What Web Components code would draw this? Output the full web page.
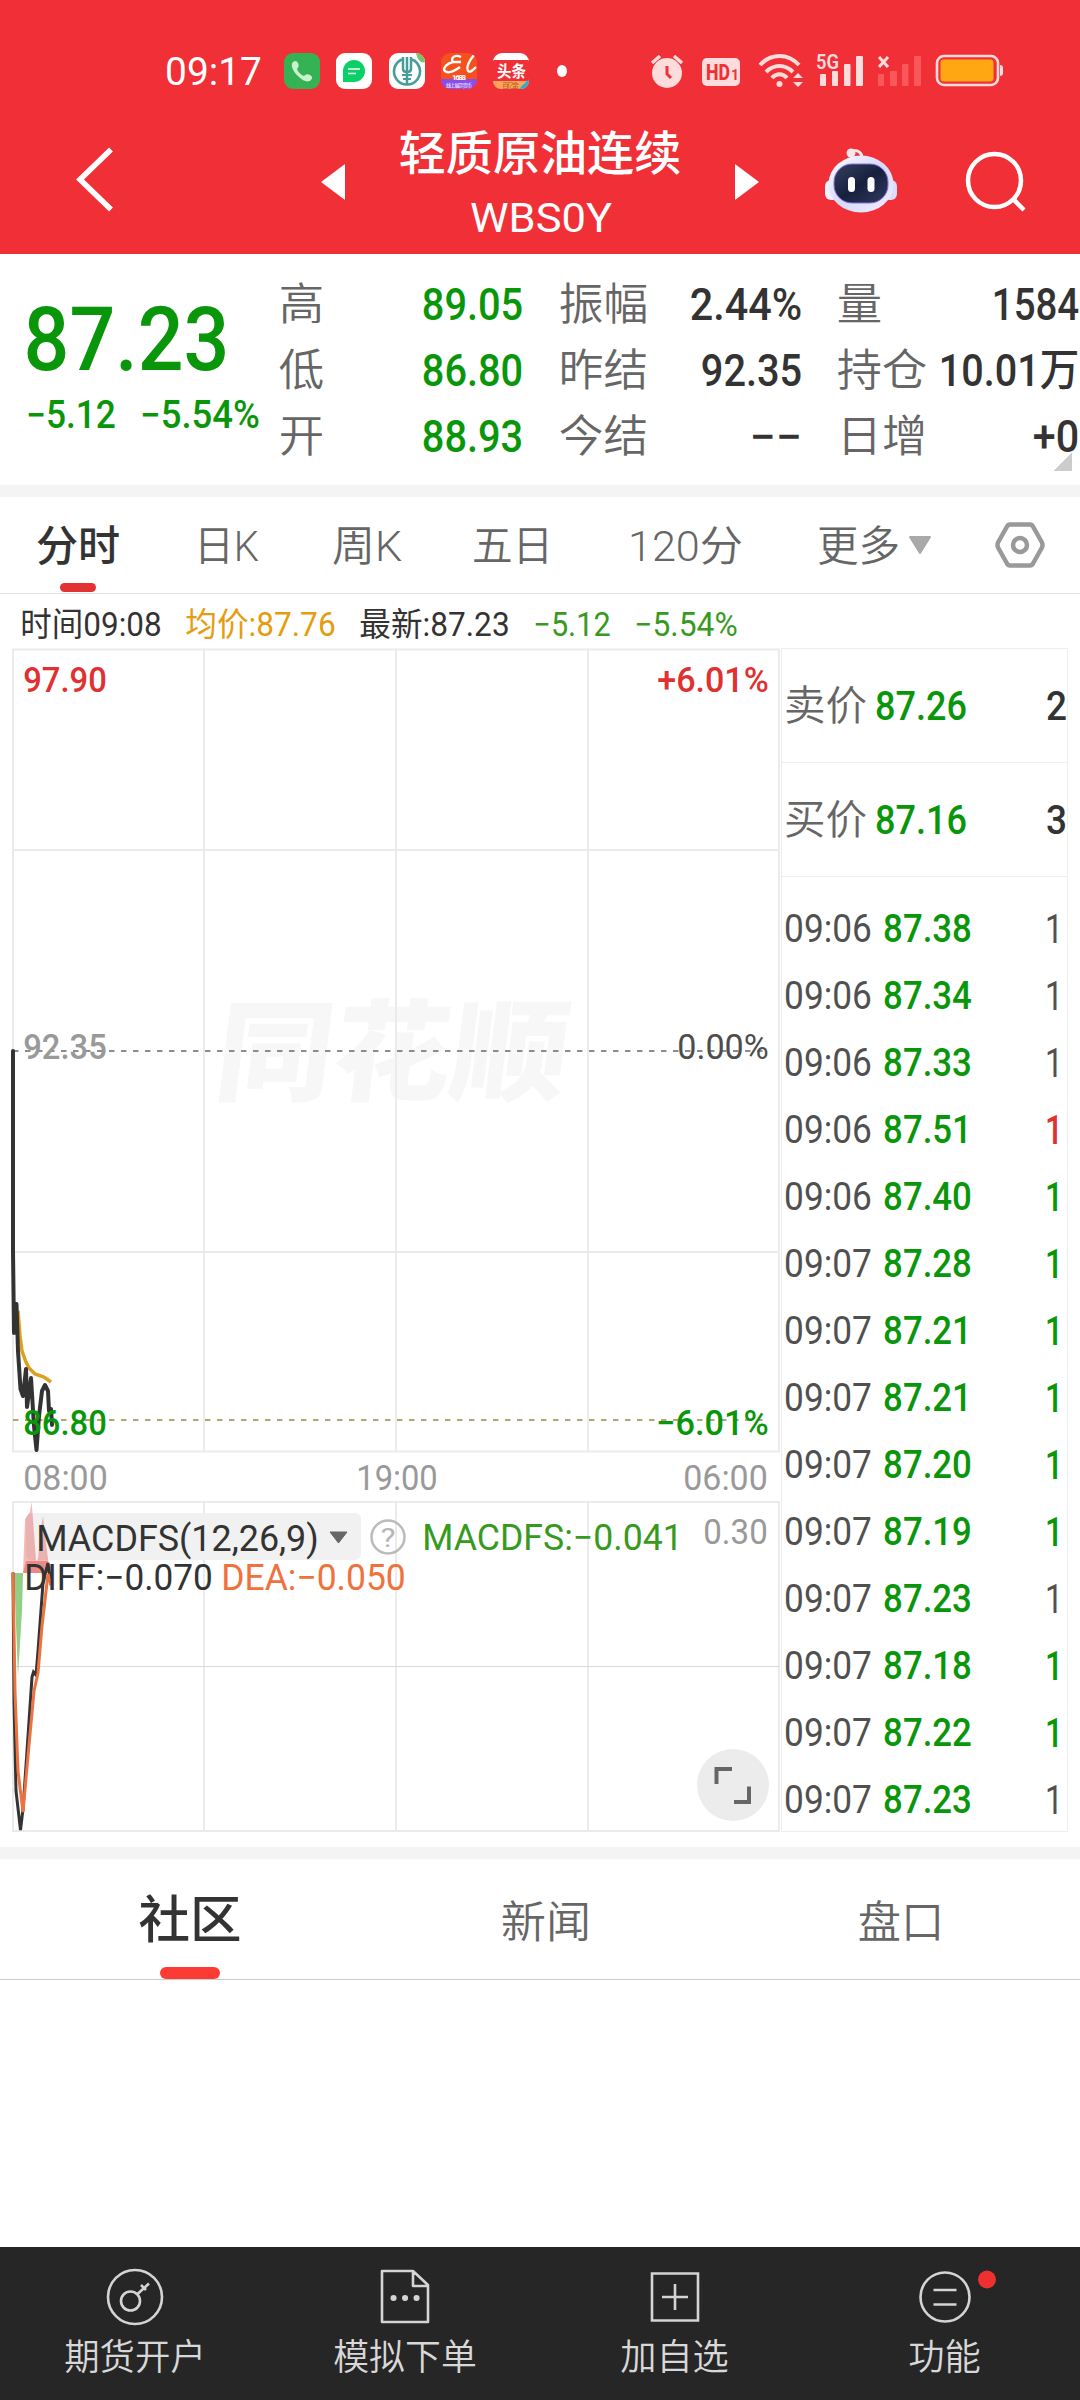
<!DOCTYPE html>
<html lang="zh-CN">
<head>
<meta charset="utf-8">
<title>轻质原油连续 WBS0Y</title>
<style>
  body { margin: 0; background: #fff; }
</style>
</head>
<body>
<quote-app></quote-app>
<script>
const FONT = 'Roboto, "Noto Sans CJK SC", sans-serif';
const GREEN = '#0a960a';
const RED = '#e0302f';

/**
 * <fit-text w size weight> — one line of text squeezed to a given ink width.
 * The box is as high as a capital letter, its bottom edge is the baseline.
 */
class FitText extends HTMLElement {
  connectedCallback() {
    const size = Number(this.getAttribute('size'));
    const w = Number(this.getAttribute('w'));
    const side = size * 0.05;
    const h = Math.round(size * 0.711);
    this.attachShadow({ mode: 'open' }).innerHTML = `
      <style>
        :host { display: block; flex: none; width: ${w}px; height: ${h}px; }
        svg { display: block; overflow: visible; }
        text { font-family: ${FONT}; fill: currentColor; white-space: pre; }
      </style>
      <svg width="${w}" height="${h}"><text x="${-side}" y="${h}" font-size="${size}"
        font-weight="${this.getAttribute('weight') || 400}" textLength="${w + side * 2}"
        lengthAdjust="spacingAndGlyphs"></text></svg>
    `;
    this.shadowRoot.querySelector('text').textContent = this.getAttribute('text');
  }
}
customElements.define('fit-text', FitText);

const t = (text, w, size, weight = 400, style = '') =>
  `<fit-text text="${text}" w="${w}" size="${size}" weight="${weight}" style="${style}"></fit-text>`;

// Elements below only differ in their markup.
function define(name, html) {
  customElements.define(name, class extends HTMLElement {
    constructor() {
      super();
      this.attachShadow({ mode: 'open' }).innerHTML = html;
    }
  });
}

define('status-bar', `
  <style>
    :host { display: flex; align-items: center; height: 50px; padding: 46px 75px 0 167px; color: #fff; }
    svg { display: block; flex: none; overflow: visible; }
    .apps { display: flex; gap: 16.3px; margin-left: 24px; }
    .dot { width: 12px; height: 12px; border-radius: 50%; background: #fff; margin-left: 27.5px; }
    .sys { display: flex; align-items: center; margin-left: 83.5px; }
    text { font-family: ${FONT}; }
  </style>
  ${t('09:17', 93, 38)}
  <div class="apps">
    <svg width="36" height="36" viewBox="0 0 36 36">
      <rect width="36" height="36" rx="9" fill="#35b254"/>
      <path d="M9 9c2-2 4-1 5 1s1 4-1 6c1 3 4 6 7 7 2-2 4-2 6-1s3 3 1 5c-3 3-8 1-12-3-6-5-9-12-6-15z" fill="#c9f3d0"/>
    </svg>
    <svg width="36" height="36" viewBox="0 0 36 36">
      <rect width="36" height="36" rx="9" fill="#fff"/>
      <path d="M7 29V18a11 11 0 1 1 11 11z" fill="#0bd068"/>
      <path d="M12 16h12M12 20.500h8" stroke="#fff" stroke-width="1.600"/>
    </svg>
    <svg width="36" height="36" viewBox="0 0 36 36">
      <rect width="36" height="36" rx="9" fill="#fff"/>
      <path d="M27 0a9 9 0 0 1 9 9c-4 2-8-3-9-9z" fill="#79c267"/>
      <g fill="none" stroke="#479d99">
        <path d="M13 6.500a13 13 0 1 0 10 0" stroke-width="2.600"/>
        <path d="M18 4v27M14 4v12q0 3 4 3t4-3V4" stroke-width="2.500"/>
        <path d="M13 22h10M14 26h8" stroke-width="2"/>
      </g>
    </svg>
    <svg width="36" height="36" viewBox="0 0 36 36">
      <defs><clipPath id="c"><rect width="36" height="36" rx="9"/></clipPath></defs>
      <g clip-path="url(#c)">
        <rect width="36" height="36" fill="#f4511e"/>
        <rect y="26" width="36" height="10" fill="#8a4dea"/>
        <path d="M20 4c-6-3-11 1-8 5-8 2-12 9-6 10 4 1 9-2 13-5M12 9l8 0M33 2c-5 6-8 12-6 16 2 2 5-1 8-4" fill="none" stroke="#fff" stroke-width="2.400"/>
      </g>
      <text x="11" y="27" font-size="8" font-weight="700" fill="#fff" textLength="14">1688</text>
      <text x="5" y="34" font-size="5" fill="#fff" textLength="26">线上展示货币</text>
    </svg>
    <svg width="36" height="36" viewBox="0 0 36 36">
      <path d="M0 9a9 9 0 0 1 9-9h18a9 9 0 0 1 9 9v-2H0z" fill="#fff"/>
      <path d="M0 28h36a8 8 0 0 1-8 8H8a8 8 0 0 1-8-8z" fill="#ffa55b"/>
      <path d="M36 26l-10 10q10 0 10-10z" fill="#1fb0dc"/>
      <text x="4" y="24" font-size="16" font-weight="700" fill="#fff" textLength="29" lengthAdjust="spacingAndGlyphs">头条</text>
      <text x="9" y="34.500" font-size="7" fill="#b35b22" textLength="17">百亿金</text>
    </svg>
  </div>
  <div class="dot"></div>
  <svg class="sys" width="355" height="36" viewBox="650 53 355 36" fill="#ffdcdc">
    <circle cx="667" cy="73" r="15"/>
    <path d="M652 63l8-7M682 63l-8-7" stroke="#ffdcdc" stroke-width="3.500"/>
    <path d="M667 66v8l4 4" fill="none" stroke="#f12f36" stroke-width="3"/>
    <rect x="702" y="58" width="38" height="28" rx="5"/>
    <text x="706" y="80" font-size="22" font-weight="800" fill="#f12f36" textLength="24" lengthAdjust="spacingAndGlyphs">HD</text>
    <text x="731" y="80" font-size="14" font-weight="700" fill="#f12f36">1</text>
    <g fill="none" stroke="#ffdcdc" stroke-width="4">
      <path d="M760 65c11-12 28-12 39 0M766 72c8-8 19-8 27 0M772 78c4-5 11-5 15 0"/>
    </g>
    <circle cx="779.500" cy="84" r="3"/>
    <path d="M793 78l5-5 5 5zM793 82h10l-5 5z"/>
    <text x="816" y="69" font-size="20" font-weight="600" textLength="23" lengthAdjust="spacingAndGlyphs">5G</text>
    <rect x="820" y="74" width="6" height="12" rx="1"/><rect x="832" y="71" width="6" height="15" rx="1"/>
    <rect x="844" y="64" width="6.500" height="22" rx="1"/><rect x="856" y="56" width="7" height="30" rx="1"/>
    <path d="M879 57l9 10M888 57l-9 10" stroke="#ffdcdc" stroke-width="3"/>
    <g fill="#fa575b">
      <rect x="878" y="74" width="6" height="12" rx="1"/><rect x="890" y="71" width="7" height="15" rx="1"/>
      <rect x="902" y="64" width="6.500" height="22" rx="1"/><rect x="914" y="56" width="7" height="30" rx="1"/>
    </g>
    <rect x="937" y="56" width="61" height="29" rx="7" fill="none" stroke="#ffdcdc" stroke-width="2.600"/>
    <rect x="940.500" y="59.500" width="53" height="22" rx="3" fill="#fea712"/>
    <path d="M1000 65q3 0 3 3v5q0 3-3 3z"/>
  </svg>
`);

define('title-bar', `
  <style>
    :host { display: flex; height: 158px; color: #fff; }
    svg { display: block; flex: none; }
    .names { width: 280px; padding-top: 41px; display: flex; flex-direction: column; align-items: center; gap: 33px; }
  </style>
  <svg width="400" height="158" viewBox="0 96 400 158">
    <path d="M111 149.500L80 179.500l31 30" fill="none" stroke="#fff" stroke-width="5.500"/>
    <path d="M345 164v36l-24-18z" fill="#fff"/>
  </svg>
  <div class="names">
    ${t('轻质原油连续', 278, 47, 500)}
    ${t('WBS0Y', 138, 41, 400, 'margin-left:2px')}
  </div>
  <svg width="400" height="158" viewBox="680 96 400 158">
    <defs>
      <linearGradient id="shell" x1="0" y1="0" x2="1" y2="1">
        <stop offset="0" stop-color="#ffffff"/><stop offset="0.500" stop-color="#d5d9fb"/><stop offset="1" stop-color="#f2f0ff"/>
      </linearGradient>
      <linearGradient id="face" x1="0" y1="0" x2="1" y2="1">
        <stop offset="0" stop-color="#34405f"/><stop offset="0.500" stop-color="#18203f"/><stop offset="1" stop-color="#303a5e"/>
      </linearGradient>
    </defs>
    <path d="M735 164v36l24-18z" fill="#fff"/>
    <path d="M851 151c7-2 11 2 11 7" fill="none" stroke="#fde8ee" stroke-width="3"/>
    <circle cx="851" cy="153" r="4.500" fill="#fbe6ec"/>
    <rect x="825" y="180" width="14" height="20" rx="6" fill="#f3f1ff"/>
    <rect x="883" y="180" width="14" height="20" rx="6" fill="#dcdcff"/>
    <ellipse cx="861" cy="184" rx="32.500" ry="28.500" fill="url(#shell)"/>
    <rect x="834" y="164" width="54" height="39" rx="18" fill="url(#face)" stroke="#8870dd" stroke-width="1"/>
    <rect x="848" y="177" width="7" height="15" rx="3.500" fill="#fff"/>
    <rect x="867.500" y="177" width="7" height="15" rx="3.500" fill="#fff"/>
    <circle cx="994.500" cy="180.500" r="26.500" fill="none" stroke="#fff" stroke-width="4.500"/>
    <path d="M1013 199l11 11" stroke="#fff" stroke-width="4.500"/>
  </svg>
`);

const QUOTE = [
  { w: 240, items: [['高', 41, '89.05', 97], ['低', 41, '86.80', 97], ['开', 41, '88.93', 97]], color: GREEN },
  { w: 239, items: [['振幅', 85, '2.44%', 108], ['昨结', 85, '92.35', 97], ['今结', 85, '−−', 48]], color: '#333' },
  { w: 238, items: [['量', 41, '1584', 83], ['持仓', 86, '10.01万', 136], ['日增', 86, '+0', 42]], color: '#333' },
];

define('quote-panel', `
  <style>
    :host { display: flex; height: 231px; border-bottom: 12px solid #f4f4f4; color: #666; background:
      linear-gradient(135deg, #fff 50%, #ccc 50%) 1053px 199px / 19px 18px no-repeat; }
    .last { width: 253px; padding: 53px 0 0 28px; color: ${GREEN}; }
    .last div { display: flex; gap: 28px; padding-top: 31px; }
    .col + .col { margin-left: 39.5px; }
    .row { height: 66px; display: flex; align-items: flex-end; justify-content: space-between; }
  </style>
  <div class="last">
    ${t('87.23', 197, 89, 500)}
    <div>${t('−5.12', 86, 38, 500)}${t('−5.54%', 116, 38, 500)}</div>
  </div>
  ${QUOTE.map(c => `<div class="col" style="width:${c.w}px">${c.items.map(([label, lw, value, vw]) =>
    `<div class="row">${t(label, lw, 44, 350)}${t(value, vw, 44, 500, `color:${c.color}`)}</div>`).join('')}</div>`).join('')}
`);

define('period-tabs', `
  <style>
    :host { display: flex; height: 64px; padding: 32px 0 0 37px; border-bottom: 1.5px solid #e2e2e2; color: #666; }
    .on { color: #333; width: 81px; display: flex; flex-direction: column; align-items: center; gap: 22px; }
    .on i { width: 36px; height: 9px; border-radius: 5px; background: #e23234; }
    svg { display: block; flex: none; margin: -10px 0 0 9px; }
    fit-text { margin-top: 2px; }
  </style>
  <div class="on">${t('分时', 80, 42, 500)}<i></i></div>
  ${t('日K', 61, 42, 350, 'margin-left:78px')}
  ${t('周K', 66, 42, 350, 'margin-left:77px')}
  ${t('五日', 77, 42, 350, 'margin-left:74px')}
  ${t('120分', 111, 42, 350, 'margin-left:79px')}
  ${t('更多', 79, 42, 350, 'margin-left:78px')}
  <svg width="140" height="52" viewBox="907 519 140 52">
    <path d="M910 537h20l-10 16z" fill="#a9a9a9" stroke="#a9a9a9" stroke-width="2" stroke-linejoin="round"/>
    <g fill="none" stroke="#999" stroke-width="4.500" stroke-linejoin="round">
      <path d="M1010 524.500h20q2 0 3 2l9 16q1 2.500 0 5l-9 16q-1 2-3 2h-20q-2 0-3-2l-9-16q-1-2.500 0-5l9-16q1-2 3-2z"/>
      <circle cx="1020" cy="545" r="7"/>
    </g>
  </svg>
`);

define('price-info', `
  <style>
    :host { display: flex; height: 34px; padding: 19px 0 0 22px; gap: 27px; color: #333; }
  </style>
  ${t('时间09:08', 138, 33)}
  ${t('均价:87.76', 147, 33, 400, 'color:#e59c0f')}
  ${t('最新:87.23', 147, 33)}
  ${t('−5.12', 74, 33, 450, 'color:#379a1f')}
  ${t('−5.54%', 100, 33, 450, 'color:#379a1f')}
`);

// Axis labels of the chart: text, left, baseline, ink width, font size, colour, weight
const LABELS = [
  ['97.90', 25, 690.5, 80, 35, RED, 500],
  ['+6.01%', 659, 690.5, 108, 35, RED, 500],
  ['92.35', 25, 1057.5, 80, 35, '#999', 500],
  ['0.00%', 679, 1057.5, 88, 35, '#4d4d4d', 450],
  ['86.80', 25, 1433.5, 80, 35, GREEN, 500],
  ['−6.01%', 658, 1433.5, 109, 35, GREEN, 500],
  ['08:00', 25, 1488.5, 81, 35, '#999', 400],
  ['19:00', 358, 1488.5, 78, 35, '#999', 400],
  ['06:00', 685, 1488.5, 81, 35, '#999', 400],
  ['0.30', 705, 1542.5, 61, 35, '#999', 400],
  ['MACDFS(12,26,9)', 38, 1549.5, 279, 36, '#333', 400],
  ['MACDFS:−0.041', 424, 1548.5, 257, 36, '#379a1f', 400],
  ['DIFF:−0.070', 26, 1588.5, 185, 36, '#333', 400],
  ['DEA:−0.050', 223, 1588.5, 181, 36, '#f0713c', 400],
];

const label = ([text, x, y, w, size, fill, weight]) =>
  `<text x="${x - size * 0.05}" y="${y}" font-size="${size}" font-weight="${weight}" fill="${fill}"
    textLength="${w + size * 0.1}" lengthAdjust="spacingAndGlyphs">${text}</text>`;

define('line-chart', `
  <style>
    :host { display: block; width: 781px; }
    svg { display: block; }
    text { font-family: ${FONT}; }
  </style>
  <svg width="781" height="1200" viewBox="0 647 781 1200" fill="none">
    <g transform="translate(217 1091) skewX(-7)">
      <text x="-5" y="0" font-size="110" font-weight="900" fill="#f7f7f7"
        textLength="352" lengthAdjust="spacingAndGlyphs">同花顺</text>
    </g>
    <path d="M13 648.500H779V1450.500H13zM204 648.500V1450.500M396 648.500V1450.500M588 648.500V1450.500M13 849H779M13 1251H779
      M13 1501H779V1830H13zM204 1501V1830M396 1501V1830M588 1501V1830" stroke="#ebebeb" stroke-width="2"/>
    <path d="M13 1665.500H779" stroke="#d9d9d9"/>
    <path d="M13 1050H768" stroke="#8c8c8c" stroke-width="2" stroke-dasharray="5.500 6.500"/>
    <path d="M13 1419H768" stroke="#b8a473" stroke-width="2" stroke-dasharray="5.500 6.500"/>
    <path d="M18 1310L20 1335 22 1350 26 1361 29 1367 35 1373 44 1376 51 1381" stroke="#dea021" stroke-width="3.500"/>
    <path d="M13 1050L13 1250 14 1332 16.500 1303 18 1350 20.500 1388 23 1395 26 1368 27 1406 31 1377 34 1425
      36.500 1449 39 1415 42 1390 45 1384 48 1390 49 1410 51 1408 52 1424"
      stroke="#333" stroke-width="4" stroke-linejoin="round" stroke-linecap="round"/>
    <rect x="26" y="1512" width="335" height="47" rx="6" fill="#f1f1f1"/>
    <path d="M23 1572L25 1518 30 1511 31.500 1501 33 1518 36 1560 38 1558 41 1526 43 1515 45 1535 50 1572z" fill="#e02a2a" opacity=".32"/>
    <path d="M23 1572l3-12h22l2 12z" fill="#e02a2a" opacity=".35"/>
    <path d="M14 1572H23L22 1610 18 1675z" fill="#90cf85"/>
    <path d="M13 1572L14 1700 16 1790 20.500 1829 23 1808 27 1750 32 1676 33.500 1671 36 1674 38 1650 43 1582 48 1562 51 1584" stroke="#333" stroke-width="3"/>
    <path d="M13 1571L15 1690 18 1770 23 1811 28 1755 34 1690 38 1672 42 1625 48 1573 51 1584" stroke="#ed7242" stroke-width="3"/>
    ${LABELS.map(label).join('')}
    <path d="M330 1531h17l-8.500 11z" fill="#666" stroke="#666" stroke-linejoin="round"/>
    <circle cx="388" cy="1536" r="16.500" stroke="#bbb" stroke-width="2.500"/>
    <text x="380.500" y="1545.500" font-size="26" fill="#b5b5b5" textLength="15" lengthAdjust="spacingAndGlyphs">?</text>
    <circle cx="733" cy="1784" r="36" fill="#ececec"/>
    <path d="M716.500 1783V1768H732M734 1801H749V1785.500" stroke="#666" stroke-width="4"/>
  </svg>
`);

const BOOK = [['卖价', '87.26', '2'], ['买价', '87.16', '3']];
const GREY = '#505050';
const TICKS = [
  ['09:06', '87.38', GREY], ['09:06', '87.34', GREY], ['09:06', '87.33', GREY], ['09:06', '87.51', RED],
  ['09:06', '87.40', GREEN], ['09:07', '87.28', GREEN], ['09:07', '87.21', GREEN], ['09:07', '87.21', GREEN],
  ['09:07', '87.20', GREEN], ['09:07', '87.19', GREEN], ['09:07', '87.23', GREY], ['09:07', '87.18', GREEN],
  ['09:07', '87.22', GREEN], ['09:07', '87.23', GREY],
];

define('tick-list', `
  <style>
    :host { display: block; box-sizing: border-box; width: 287px; height: 1184px; border: 1.5px solid #eee; color: #666; }
    .row { display: flex; align-items: center; box-sizing: border-box; padding: 0 2px 0 4px; }
    .row > :last-child { margin-left: auto; }
    .book { height: 114px; border-bottom: 1.5px solid #eee; }
    .ticks { padding-top: 18px; }
    .tick { height: 67px; color: ${GREY}; padding-right: 6px; }
  </style>
  ${BOOK.map(([name, price, n]) => `<div class="row book">${t(name, 79, 41, 350)}
    ${t(price, 88, 40, 500, `color:${GREEN};margin-left:12px`)}${t(n, 17, 40, 500, 'color:#333')}</div>`).join('')}
  <div class="ticks">
    ${TICKS.map(([time, price, color]) => `<div class="row tick">${t(time, 84, 38)}
      ${t(price, 85, 38, 500, `color:${GREEN};margin-left:15px`)}${t('1', 14, 40, color === GREY ? 400 : 500, `color:${color}`)}</div>`).join('')}
  </div>
`);

define('page-tabs', `
  <style>
    :host { display: flex; height: 120px; border-top: 12px solid #f4f4f4; border-bottom: 1.5px solid #ccc; color: #666; }
    div { flex: none; box-sizing: border-box; display: flex; flex-direction: column; align-items: center; padding-top: 44px; }
    .on { width: 380px; padding-top: 43px; color: #333; }
    i { width: 60px; height: 12px; border-radius: 6px; background: #fb3b34; margin-top: 29px; }
    .news { width: 332px; }
    .depth { width: 378px; }
  </style>
  <div class="on">${t('社区', 98, 51, 500)}<i></i></div>
  <div class="news">${t('新闻', 86, 44, 350, 'margin-top:4px')}</div>
  <div class="depth">${t('盘口', 82, 44, 350, 'margin-top:4px')}</div>
`);

const NAV = [
  ['期货开户', 138, `<circle cx="35" cy="35" r="27"/><circle cx="30.500" cy="39" r="9.500"/><path d="M37 32.500L49 21.500M41 23l5 5"/>`],
  ['模拟下单', 140, `<path d="M12 9h31l15 14v37H12zM43 9v15h14" stroke-linejoin="round"/>
    <path d="M23.500 36h.1M35 36h.1M46.500 36h.1" stroke-width="6" stroke-linecap="round"/>`],
  ['加自选', 105, `<path d="M12 11.500h46v47H12zM22 35h26M35 22v26"/>`],
  ['功能', 69, `<circle cx="35" cy="35" r="24.500"/><path d="M23.500 28h23M23.500 42.500h23"/>
    <circle cx="77" cy="17.500" r="9" fill="#ef3030" stroke="none"/>`],
];

define('bottom-nav', `
  <style>
    :host { display: flex; height: 153px; background: #262626; color: #d8d8d8; }
    div { flex: 1; display: flex; flex-direction: column; align-items: center; padding-top: 15px; gap: 12px; margin-left: -1px; }
    svg { display: block; overflow: visible; fill: none; stroke: #d4d4d4; stroke-width: 2.600; }
  </style>
  ${NAV.map(([name, w, icon]) => `<div><svg width="70" height="70">${icon}</svg>${t(name, w, 36, 350)}</div>`).join('')}
`);

define('quote-app', `
  <style>
    :host { display: flex; flex-direction: column; width: 1080px; height: 2400px; overflow: hidden; }
    header { height: 254px; background: #f12f36; }
    main { display: flex; height: 1200px; margin-top: 1px; }
    bottom-nav { margin-top: auto; }
    header, main, quote-panel, period-tabs, price-info, page-tabs, bottom-nav { flex: none; }
    page-tabs { margin-top: -1px; }
  </style>
  <header><status-bar></status-bar><title-bar></title-bar></header>
  <quote-panel></quote-panel>
  <period-tabs></period-tabs>
  <price-info></price-info>
  <main><line-chart></line-chart><tick-list></tick-list></main>
  <page-tabs></page-tabs>
  <bottom-nav></bottom-nav>
`);
</script>
</body>
</html>
